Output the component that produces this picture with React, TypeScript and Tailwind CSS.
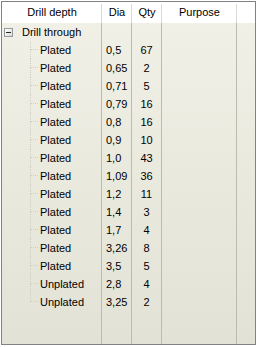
import React from 'react';

interface DrillRow {
    kind: string;
    dia: string;
    qty: number;
}

const rows: DrillRow[] = [
    { kind: 'Plated', dia: '0,5', qty: 67 },
    { kind: 'Plated', dia: '0,65', qty: 2 },
    { kind: 'Plated', dia: '0,71', qty: 5 },
    { kind: 'Plated', dia: '0,79', qty: 16 },
    { kind: 'Plated', dia: '0,8', qty: 16 },
    { kind: 'Plated', dia: '0,9', qty: 10 },
    { kind: 'Plated', dia: '1,0', qty: 43 },
    { kind: 'Plated', dia: '1,09', qty: 36 },
    { kind: 'Plated', dia: '1,2', qty: 11 },
    { kind: 'Plated', dia: '1,4', qty: 3 },
    { kind: 'Plated', dia: '1,7', qty: 4 },
    { kind: 'Plated', dia: '3,26', qty: 8 },
    { kind: 'Plated', dia: '3,5', qty: 5 },
    { kind: 'Unplated', dia: '2,8', qty: 4 },
    { kind: 'Unplated', dia: '3,25', qty: 2 },
];

// column widths include the 1px separator on the right
const cols = 'grid grid-cols-[100px_30px_30px_75px_1fr]';
const cell = 'border-r border-[#bdbbb0] h-[18px] flex items-center';

function HeaderCell({ label }: { label: string }) {
    return (
        <div className="relative flex items-center justify-center h-full">
            {label}
            <span className="absolute right-0 top-[2px] bottom-0 w-px bg-[#d9d9d6]" />
        </div>
    );
}

function Connector({ last }: { last: boolean }) {
    return (
        <div className="flex flex-col w-[8px] h-full ml-[28px] mr-[2px]">
            <div className="h-[9px] border-l border-b border-dotted border-[#cfcfc6]" />
            <div className={last ? 'flex-1' : 'flex-1 border-l border-dotted border-[#cfcfc6]'} />
        </div>
    );
}

export default function App() {
    return (
        <div className="w-[258px] h-[347px] bg-white pl-[1px] pt-[1px] pr-[2px] pb-[2px] font-['Liberation_Sans',sans-serif] text-[11px] text-black">
            <div className="w-full h-full border border-[#7f8388] flex flex-col">
                <div className={`${cols} h-[21px] bg-white shrink-0`}>
                    <HeaderCell label="Drill depth" />
                    <HeaderCell label="Dia" />
                    <HeaderCell label="Qty" />
                    <HeaderCell label="Purpose" />
                    <div />
                </div>
                <div className="flex-1 flex flex-col bg-linear-to-b from-[#f1f0e6] to-[#e3e2d6]">
                    <div className={cols}>
                        <div className={cell}>
                            <span className="ml-[2px] w-[9px] h-[9px] border border-[#939ba2] bg-linear-to-br from-white to-[#dcdad0] flex items-center justify-center">
                                <span className="w-[5px] h-px bg-[#2a2a2a]" />
                            </span>
                            <span className="ml-[9px]">Drill through</span>
                        </div>
                        <div className={cell} />
                        <div className={cell} />
                        <div className={cell} />
                        <div />
                    </div>
                    {rows.map((r, i) => (
                        <div key={i} className={cols}>
                            <div className={cell}>
                                <Connector last={i === rows.length - 1} />
                                <span>{r.kind}</span>
                            </div>
                            <div className={`${cell} pl-[4px]`}>{r.dia}</div>
                            <div className={`${cell} justify-center`}>{r.qty}</div>
                            <div className={cell} />
                            <div />
                        </div>
                    ))}
                    <div className={`${cols} flex-1`}>
                        <div className="border-r border-[#bdbbb0]" />
                        <div className="border-r border-[#bdbbb0]" />
                        <div className="border-r border-[#bdbbb0]" />
                        <div className="border-r border-[#bdbbb0]" />
                        <div />
                    </div>
                </div>
            </div>
        </div>
    );
}
